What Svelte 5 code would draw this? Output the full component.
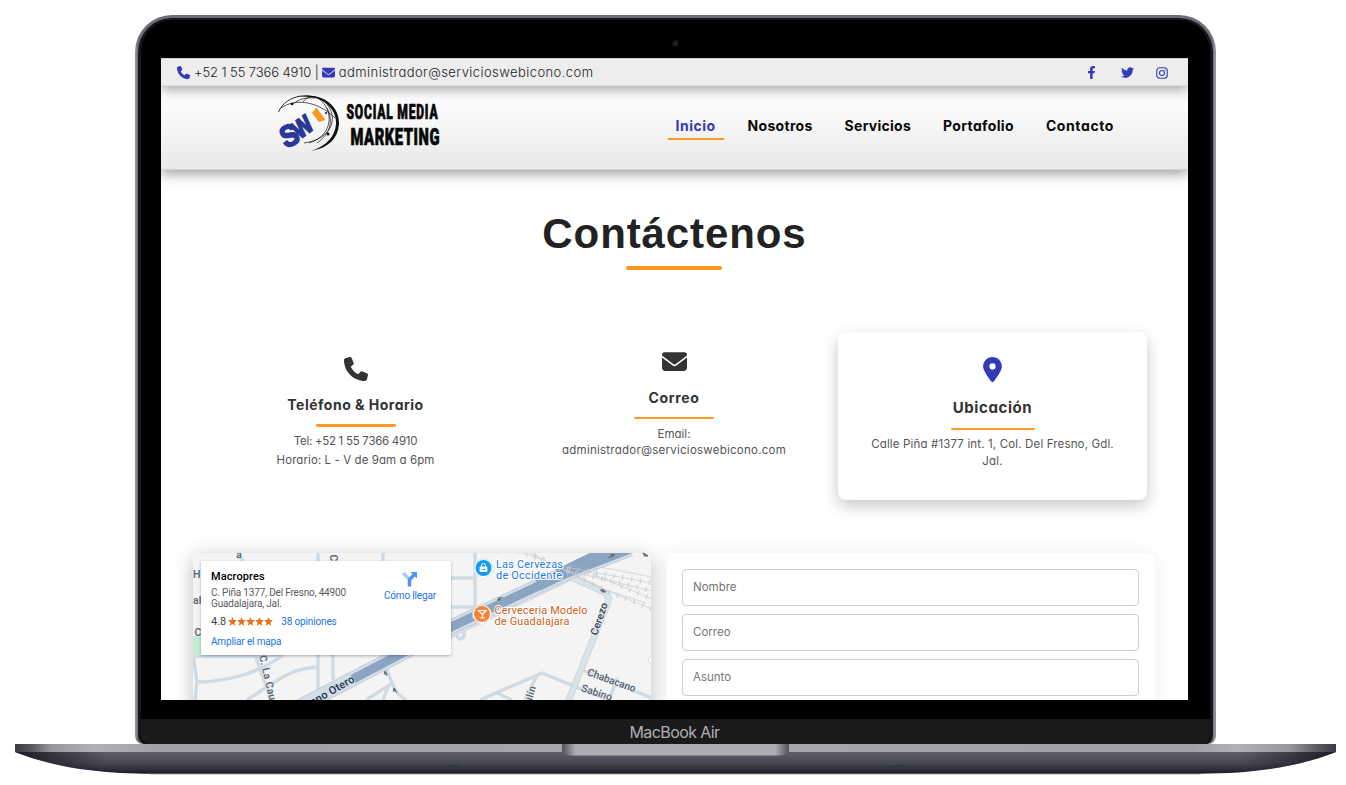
<script>
  const nav = ['Inicio', 'Nosotros', 'Servicios', 'Portafolio', 'Contacto'];
  const fields = ['Nombre', 'Correo', 'Asunto'];
  const icons = {
    phone: 'M164.9 24.6c-7.7-18.6-28-28.5-47.4-23.2l-88 24C12.1 30.2 0 46 0 64C0 311.4 200.6 512 448 512c18 0 33.8-12.1 38.6-29.5l24-88c5.3-19.4-4.6-39.7-23.2-47.4l-96-40c-16.3-6.8-35.2-2.1-46.3 11.6L304.7 368C234.3 334.7 177.3 277.7 144 207.3L193.3 167c13.7-11.2 18.4-30 11.6-46.3l-40-96z',
    mail: 'M48 64C21.5 64 0 85.5 0 112c0 15.1 7.1 29.3 19.2 38.4L236.8 313.6c11.4 8.5 27 8.5 38.4 0L492.8 150.4c12.1-9.1 19.2-23.3 19.2-38.4c0-26.5-21.5-48-48-48H48zM0 176V384c0 35.3 28.7 64 64 64H448c35.3 0 64-28.7 64-64V176L294.4 339.2c-22.8 17.1-54 17.1-76.8 0L0 176z',
    pin: 'M279.7 499.2C331 435 448 279.4 448 192C448 86 362 0 256 0S64 86 64 192c0 87.4 117 243 168.3 307.2c12.3 15.3 35.1 15.3 47.4 0zM256 128a64 64 0 1 1 0 128 64 64 0 1 1 0-128z',
    facebook: 'M375.14 288l14.22-92.66h-88.91v-60.13c0-25.35 12.42-50.06 52.24-50.06h40.42V6.26S356.43 0 321.36 0c-73.22 0-121.08 44.38-121.08 124.72v70.62h-81.39V288h81.39v224h100.17V288z',
    twitter: 'M459.37 151.716c.325 4.548.325 9.097.325 13.645 0 138.72-105.583 298.558-298.558 298.558-59.452 0-114.68-17.219-161.137-47.106 8.447.974 16.568 1.299 25.34 1.299 49.055 0 94.213-16.568 130.274-44.832-46.132-.975-84.792-31.188-98.112-72.772 6.498.974 12.995 1.624 19.818 1.624 9.421 0 18.843-1.3 27.614-3.573-48.081-9.747-84.143-51.98-84.143-102.985v-1.299c13.969 7.797 30.214 12.67 47.431 13.319-28.264-18.843-46.781-51.005-46.781-87.391 0-19.492 5.197-37.36 14.294-52.954 51.655 63.675 129.3 105.258 216.365 109.807-1.624-7.797-2.599-15.918-2.599-24.04 0-57.828 46.782-104.934 104.934-104.934 30.213 0 57.502 12.67 76.67 33.137 23.715-4.548 46.456-13.32 66.599-25.34-7.798 24.366-24.366 44.833-46.132 57.827 21.117-2.273 41.584-8.122 60.426-16.243-14.292 20.791-32.161 39.308-52.628 54.253z'
  };
</script>

{#snippet icon(name, size)}
  <svg class="icon" width={size} height={size} viewBox="0 0 512 512"><path fill="currentColor" fill-rule="evenodd" d={icons[name]} /></svg>
{/snippet}

<div class="stage">
  <div class="lid">
    <div class="bezel">
      <div class="camera-row"><i class="camera"></i></div>
      <main class="screen">
        <div class="topbar">
          <div class="contact">
            {@render icon('phone', 13)}<span class="tel">+52 1 55 7366 4910 |</span>
            {@render icon('mail', 13)}<span class="email">administrador@servicioswebicono.com</span>
          </div>
          <div class="social">
            {@render icon('facebook', 13)}
            {@render icon('twitter', 13)}
            <svg class="icon" width="12" height="12" viewBox="0 0 24 24" fill="none" stroke="currentColor" stroke-width="2.2"><rect x="1.5" y="1.5" width="21" height="21" rx="6" /><circle cx="12" cy="12" r="5" /><circle cx="18" cy="6" r="1" fill="currentColor" stroke="none" /></svg>
          </div>
        </div>

        <header>
          <svg class="logo" width="170" height="62" viewBox="275 92 170 62">
            <g fill="none" stroke="#111">
              <path stroke-width=".9" d="M278.500 112C286 94 312 91 327 103" />
              <path fill="#111" stroke="none" d="M298 97C322 91 340 106 339 124C338 139 328 148 311 151C326 146 335 137 336 124C337 108 321 94 298 97Z" />
              <path stroke-width=".7" d="M281 108C295 98 318 101 335 118M292 105C298 99 307 97 315 98M303 102Q306 97 313 97" />
              <path stroke-width=".7" d="M318 98C335 110 333 136 309 143M324 101C340 116 333 139 304 143M327 108C334 121 330 134 317 143" />
            </g>
            <g fill="#111"><circle cx="292" cy="104" r="1.300" /><circle cx="326" cy="113" r="1" /><circle cx="328" cy="134" r="1.500" /></g>
            <g class="swi" fill="#2a3796" stroke="#2a3796">
              <text stroke-width="1.800" transform="translate(285.500 148.500) rotate(-24) scale(.88 1)" font-size="30">S</text>
              <text stroke-width="1.800" transform="translate(299.500 139.500) rotate(-36) scale(.82 1)" font-size="25">W</text>
              <path fill="#fa981f" stroke="none" d="M312 113L316.500 107.500L325.500 120L319 122Z" />
            </g>
            <text class="brand" transform="translate(346.500 118.700) scale(.62 1)" font-size="19.500" textLength="147">SOCIAL MEDIA</text>
            <text class="brand" transform="translate(350.500 145) scale(.64 1)" font-size="23" textLength="139">MARKETING</text>
          </svg>
          <nav>
            {#each nav as item, i}
              <a class="n{i}" class:active={i === 0} href="#{item}">{item}</a>
            {/each}
          </nav>
        </header>

        <h1>Contáctenos</h1>
        <div class="rule"></div>

        <section class="cards">
          <article class="phone">
            {@render icon('phone', 24)}
            <h2>Teléfono &amp; Horario</h2>
            <hr />
            <p class="number">Tel: +52 1 55 7366 4910</p>
            <p>Horario: L - V de 9am a 6pm</p>
          </article>
          <article class="mail">
            {@render icon('mail', 25)}
            <h2>Correo</h2>
            <hr />
            <p>Email:</p>
            <p class="address">administrador@servicioswebicono.com</p>
          </article>
          <article class="place">
            {@render icon('pin', 25)}
            <h2>Ubicación</h2>
            <hr />
            <p>Calle Piña #1377 int. 1, Col. Del Fresno, Gdl.</p>
            <p>Jal.</p>
          </article>
        </section>

        <section class="lower">
          <div class="map">
            <svg width="458" height="147" viewBox="193 553 458 147">
              <rect x="193" y="553" width="458" height="147" fill="#f4f4f4" />
              <path d="M193 636h12v18h-12z" fill="#c3ecce" />
              <g fill="none" stroke="#d0dae3" stroke-width="3.4">
                <path d="M193 655L197 682L195 700M193 656H260L280 655M197 682C220 682 255 676 283 655M247 700C275 682 290 668 318 667M255 655L271 700M318 553V690M333 650V680M383 553V562M239 553L243 561M451 578H475M475 553V607H451M386 667L392 683Q396 694 406 700M391 684L366 700M388 687L383 700" />
                <path d="M480 700L542 673L608 700M537 675L525 700M497 693L512 700M582 670L652 698M617 678L611 695" />
                <path d="M456 631Q456 639 461 639Q467 636 462 627" />
              </g>
              <path d="M450 635L571 577L604 592Q612 597 606 607L568 702" fill="none" stroke="#c6d1da" stroke-width="6.500" />
              <path d="M450 635L571 577L604 592Q612 597 606 607L568 702" fill="none" stroke="#d9e3ea" stroke-width="5" />
              <path d="M297 708L395 657L451 627L562 575L630 549" fill="none" stroke="#bccad7" stroke-width="15" />
              <path d="M297 708L395 657L451 627L562 575L630 549" fill="none" stroke="#d3dee8" stroke-width="13.500" />
              <path d="M353 679L395 657L451 627L562 575L630 549" fill="none" stroke="#8aa4c2" stroke-width="9" />
              <path d="M538 585L593 558L622 549" fill="none" stroke="#8aa4c2" stroke-width="12" />
              <g fill="none" stroke="#c8ccd0" stroke-width=".7">
                <path d="M518 551L560 566L652 583M526 551L565 570L652 591M560 568L600 588L652 609M558 566L606 590L646 603M588 572L652 599M600 567L652 577" />
                <path stroke-dasharray="1 8" stroke-width="5" d="M518 551L560 566L652 583M526 551L565 570L652 591M560 568L600 588L652 609M588 572L652 599" />
              </g>
              <g stroke="#67727d" stroke-width="1" fill="#67727d">
                <path d="M503 597L497 600M497 600l3 0v-3zM608 558L615 555M615 555l-4-1v3zM600 590L606 592M606 592l-4-3v3zM387 676L385 671M385 671l-1 3h3zM394 688L397 693M394 688l-1 3h3zM642 553L648 556M648 556l-4-3v3z" />
              </g>
              <g class="street">
                <text x="193" y="578">H</text><text x="193" y="604">al</text><text x="194.500" y="636">C</text>
                <text transform="translate(236 558) rotate(4)">a</text>
                <text transform="translate(330 554.500) rotate(90)">C</text>
                <text transform="translate(259 656) rotate(77)">C. La Cau</text>
                <text class="major" transform="translate(312.500 706) rotate(-30)">ano Otero</text>
                <text class="cerezo" transform="translate(597 636) rotate(-71)">Cerezo</text>
                <text transform="translate(586.500 675) rotate(20)" textLength="51">Chabacano</text>
                <text transform="translate(580.500 691) rotate(18)" textLength="32">Sabino</text>
                <text transform="translate(531 704) rotate(-73)">ulín</text>
              </g>
              <g fill="#fff" stroke="#d0d5d8" stroke-width=".7">
                <path d="M474 568.500a9.500 9.500 0 1 1 19 0c0 6-6 6.500-9.500 11.500c-3.500-5-9.500-5.500-9.500-11.500z" />
                <path d="M472.500 614.500a9.500 9.500 0 1 1 19 0c0 6-6 6.500-9.500 11.500c-3.500-5-9.500-5.500-9.500-11.500z" />
                <circle cx="653" cy="660" r="4.500" />
              </g>
              <circle cx="483.500" cy="568" r="8" fill="#119bf5" />
              <path d="M480 567h7v4.500h-7z" fill="#fff" stroke="#fff" stroke-width=".8" />
              <path d="M481.500 567v-1.500a2 2 0 0 1 4 0v1.500" fill="none" stroke="#fff" />
              <path d="M482 569.500h3" stroke="#119bf5" />
              <circle cx="482" cy="614" r="8" fill="#f98334" />
              <path d="M478.500 610.500h7.500L482.500 614.500zM482.400 614v4M479.800 618h5.200" fill="none" stroke="#fff" stroke-width="1.200" />
              <g class="poi" fill="#1e7ae0">
                <text x="496" y="567.500" textLength="67">Las Cervezas</text>
                <text x="496" y="578.500" textLength="66">de Occidente</text>
              </g>
              <g class="poi" fill="#d35d13">
                <text x="494.500" y="614" textLength="93">Cervecería Modelo</text>
                <text x="494.500" y="625" textLength="75">de Guadalajara</text>
              </g>
            </svg>
            <div class="info">
              <div class="details">
                <strong>Macropres</strong>
                <p>C. Piña 1377, Del Fresno, 44900<br />Guadalajara, Jal.</p>
                <div class="rating">
                  <span>4.8</span>
                  <svg width="45" height="9" viewBox="0 0 45 9" fill="#e7711b">
                    {#each [0, 9, 18, 27, 36] as x}
                      <path transform="translate({x} 0)" d="M4.500 0L5.700 3.100L9 3.300L6.400 5.400L7.300 8.700L4.500 6.900L1.700 8.700L2.600 5.400L0 3.300L3.300 3.100Z" />
                    {/each}
                  </svg>
                  <a href="#opiniones">38 opiniones</a>
                </div>
                <a class="enlarge" href="#mapa">Ampliar el mapa</a>
              </div>
              <a class="route" href="#ruta">
                <svg width="16" height="16" viewBox="0 0 16 16"><path d="M1 2L8 9" stroke="#a9cdf7" stroke-width="3.500" fill="none" /><path d="M7.500 15.500V10Q7.500 8.500 9 7L12 4" stroke="#5194eb" stroke-width="3.500" fill="none" /><path d="M8.500 1H15V7.500Z" fill="#5194eb" /></svg>
                <span>Cómo llegar</span>
              </a>
            </div>
          </div>
          <form>
            {#each fields as field}
              <input type="text" placeholder={field} aria-label={field} />
            {/each}
          </form>
        </section>
      </main>
      <div class="chin"><span>MacBook Air</span></div>
    </div>
  </div>

  <svg class="base" width="1346" height="34" viewBox="0 744 1346 34">
    <defs>
      <linearGradient id="deck" x1="0" x2="1" y1="0" y2="0"><stop offset="0" stop-color="#3a3b44" /><stop offset=".012" stop-color="#55565d" /><stop offset=".027" stop-color="#96979c" /><stop offset=".06" stop-color="#b1b2b6" /><stop offset=".11" stop-color="#a0a1a6" /><stop offset=".5" stop-color="#a6a7ac" /><stop offset=".89" stop-color="#a0a1a6" /><stop offset=".925" stop-color="#b1b2b6" /><stop offset=".965" stop-color="#96979c" /><stop offset=".988" stop-color="#55565d" /><stop offset="1" stop-color="#3a3b44" /></linearGradient>
      <linearGradient id="belly" x1="0" x2="0" y1="0" y2="1"><stop offset="0" stop-color="#5e5f68" /><stop offset=".55" stop-color="#454650" /><stop offset="1" stop-color="#1b1c24" /></linearGradient>
      <linearGradient id="notch" x1="0" x2="1" y1="0" y2="0"><stop offset="0" stop-color="#505159" /><stop offset=".06" stop-color="#adaeb2" /><stop offset=".94" stop-color="#adaeb2" /><stop offset="1" stop-color="#505159" /></linearGradient>
      <linearGradient id="side" x1="0" x2="1" y1="0" y2="0"><stop offset="0" stop-color="#191a22" /><stop offset=".07" stop-color="#191a22" stop-opacity="0" /><stop offset=".93" stop-color="#191a22" stop-opacity="0" /><stop offset="1" stop-color="#191a22" /></linearGradient>
    </defs>
    <path d="M150 774.300H1200" stroke="#c9c9cd" />
    <path d="M15 752C48 765 90 773.700 152 773.700H1199C1261 773.700 1303 765 1336 752Z" fill="url(#belly)" />
    <path d="M15 752C48 765 90 773.700 152 773.700H1199C1261 773.700 1303 765 1336 752Z" fill="url(#side)" />
    <path d="M15 744H1336V752H15Z" fill="url(#deck)" />
    <path d="M562 744H789V751Q787 755.500 779 755.500H572Q564 755.500 562 751Z" fill="url(#notch)" />
    <path d="M447 765l3 1h9M890 766h10l3-1" stroke="#2a2b34" stroke-width=".7" fill="none" />
  </svg>
</div>

<style>
  :global(body) { background: #fff; }
  .stage { width: 1346px; height: 785px; padding-top: 15px; box-sizing: border-box; overflow: hidden; font-family: Inter, sans-serif; font-feature-settings: 'cv11'; background: #fff; }
  .lid { width: 1081px; height: 729px; margin-left: 135px; box-sizing: border-box; padding: 3px 3px 0; border-radius: 37px 37px 8px 8px; background: linear-gradient(90deg, #98999f, #6c6e76 3px, #6c6e76 1077px, #98999f); }
  .bezel { height: 726px; box-sizing: border-box; border: solid #15171a; border-width: 2px 3px 0; border-radius: 34px 34px 8px 8px; background: #000; overflow: hidden; display: flex; flex-direction: column; }
  .camera-row { height: 38px; flex: none; display: flex; justify-content: center; align-items: center; padding-top: 8px; box-sizing: border-box; }
  .camera { width: 5px; height: 5px; border-radius: 50%; background: #1c1e20; border: 1px solid #111; }
  .screen { width: 1027px; height: 642px; flex: none; margin-left: 20px; background: #fff; overflow: hidden; }
  .chin { margin-top: 19px; height: 25px; background: #1a1a1a; display: flex; justify-content: center; align-items: center; color: #b0b0b2; font-size: 16px; letter-spacing: -.6px; font-feature-settings: normal; border-radius: 0 0 8px 8px; padding-right: 2px; }
  .icon { flex: none; display: block; }
  .base { display: block; }

  .topbar { position: relative; z-index: 2; height: 28px; box-sizing: border-box; display: flex; justify-content: space-between; align-items: center; padding: 1px 20px 0 16px; background: #ededed; border-bottom: 1px solid #ddd; border-top: 1px solid #d0d0d0; box-shadow: 0 4px 12px rgba(0, 0, 0, .35); color: #343ab7; }
  .contact { display: flex; align-items: center; font-size: 13px; font-weight: 300; color: #343ab7; }
  .contact span { color: #222; white-space: nowrap; padding-bottom: 2px; }
  .tel { margin: 0 3px 0 4px; letter-spacing: -.1px; }
  .email { margin-left: 4px; letter-spacing: .43px; }
  .social { display: flex; align-items: center; gap: 22.5px; }

  header { position: relative; z-index: 1; height: 84px; box-sizing: border-box; display: flex; align-items: flex-start; justify-content: space-between; padding: 6px 66px 0 114px; background: linear-gradient(#fff, #fafafa 30%, #e9e9e9); box-shadow: 0 4px 12px rgba(0, 0, 0, .38); border-bottom: 1px solid #d4d4d4; }
  .logo { display: block; }
  .brand { font-family: Roboto, sans-serif; font-weight: 900; fill: #080808; stroke: #080808; stroke-width: .7px; }
  .swi { font-family: "Liberation Sans", sans-serif; font-weight: 700; }
  nav { display: flex; padding-top: 21px; gap: 16px; }
  nav a { height: 27px; box-sizing: border-box; padding: 3px 8px 0; line-height: 20px; font-size: 14px; font-weight: 700; color: #080808; text-decoration: none; white-space: nowrap; }
  nav a.active { color: #343ab7; border-bottom: 2px solid #fa9b26; }
  .n0 { letter-spacing: .5px; }
  .n1 { letter-spacing: .3px; }
  .n2 { letter-spacing: .26px; }
  .n3 { letter-spacing: .35px; }
  .n4 { letter-spacing: .6px; }

  h1 { margin: 37px 0 0; height: 54px; text-align: center; font: 700 42px/54px "Liberation Sans", sans-serif; letter-spacing: .9px; color: #222; }
  .rule { width: 96px; height: 4px; border-radius: 2px; margin: 5px 0 0 465px; background: #fa981f; }

  .cards { display: grid; grid-template-columns: 309px 309px 309px; gap: 9px; margin: 62px 0 0 41px; height: 168px; }
  article { display: flex; flex-direction: column; align-items: center; color: #333; border-radius: 8px; }
  h2 { margin: 0; font-size: 14px; line-height: 20px; font-weight: 700; white-space: nowrap; color: #333; }
  hr { width: 80px; height: 2px; border: 0; margin: 0; background: #fa9b26; border-radius: 1px; }
  article p { margin: 0; font-size: 11.500px; white-space: nowrap; color: #555; }
  .phone { padding-top: 25px; margin-left: -2px; }
  .phone h2 { margin-top: 14px; letter-spacing: .5px; }
  .phone hr { margin: 9px 0 5px; height: 3px; }
  .phone p { line-height: 19px; letter-spacing: .08px; }
  .phone .number { letter-spacing: -.28px; }
  .mail { padding-top: 17px; margin-left: -1px; }
  .mail h2 { margin-top: 14px; letter-spacing: .65px; }
  .mail hr { margin: 9px 0 7px; }
  .mail p { line-height: 16px; }
  .mail .address { letter-spacing: .24px; }
  .place { box-shadow: 0 6px 16px rgba(0, 0, 0, .22); padding-top: 25px; box-sizing: border-box; background: #fff; }
  .place :global(.icon) { color: #343ab7; }
  .place h2 { margin-top: 16px; font-size: 15px; letter-spacing: .6px; }
  .place hr { width: 84px; margin: 10px 0 6px; }
  .place p { line-height: 17px; letter-spacing: .15px; }

  .lower { display: flex; gap: 15px; margin: 53px 0 0 32px; }
  .map { position: relative; width: 458px; height: 200px; border-radius: 6px; overflow: hidden; box-shadow: 0 4px 20px rgba(0, 0, 0, .26); background: #f4f4f4; }
  .map > svg { display: block; }
  .street { font-family: Roboto, sans-serif; font-size: 10.500px; font-weight: 600; letter-spacing: .15px; fill: #5a6878; stroke: #f4f4f4; stroke-width: 1.200px; paint-order: stroke; }
  .major { fill: #2d3e52; stroke: #d3dee8; font-size: 11px; }
  .cerezo { fill: #3a495b; }
  .poi { font-family: Roboto, sans-serif; font-size: 11px; stroke: #fff; stroke-width: 2px; paint-order: stroke; }
  .info { position: absolute; left: 8px; top: 8px; width: 250px; height: 94px; background: #fff; box-shadow: 0 1px 3px rgba(0, 0, 0, .3); border-radius: 1px; display: flex; justify-content: space-between; box-sizing: border-box; padding: 8px 15px 0 10px; font-family: Roboto, sans-serif; font-size: 10px; font-feature-settings: normal; }
  .info strong { display: block; font-size: 11px; line-height: 15px; font-weight: 500; letter-spacing: .1px; color: #000; }
  .info p { margin: 3px 0 0; line-height: 11px; color: #5b5b5b; white-space: nowrap; letter-spacing: -.18px; }
  .rating { display: flex; align-items: center; height: 12px; margin-top: 6px; color: #444; font-size: 11px; }
  .rating svg { margin: 0 8px 0 2px; }
  .info a { color: #1a73e8; text-decoration: none; font-size: 10px; letter-spacing: -.15px; white-space: nowrap; }
  .info .enlarge { display: block; line-height: 12px; margin-top: 9px; }
  .route { display: flex; flex-direction: column; align-items: center; padding-top: 2px; }
  .route span { line-height: 12px; margin-top: 3px; }

  form { width: 489px; height: 200px; box-sizing: border-box; padding: 16px 16px 0; display: flex; flex-direction: column; gap: 8px; border-radius: 6px; background: #fff; box-shadow: 0 0 20px rgba(0, 0, 0, .07); }
  input { flex: none; width: 457px; height: 37px; box-sizing: border-box; padding: 0 10px 2px; border: 1px solid #cfcfcf; border-radius: 4px; outline: 0; background: #fff; font: 400 11.500px Inter, sans-serif; font-feature-settings: 'cv11'; }
  input::placeholder { color: #757575; opacity: 1; }
</style>
